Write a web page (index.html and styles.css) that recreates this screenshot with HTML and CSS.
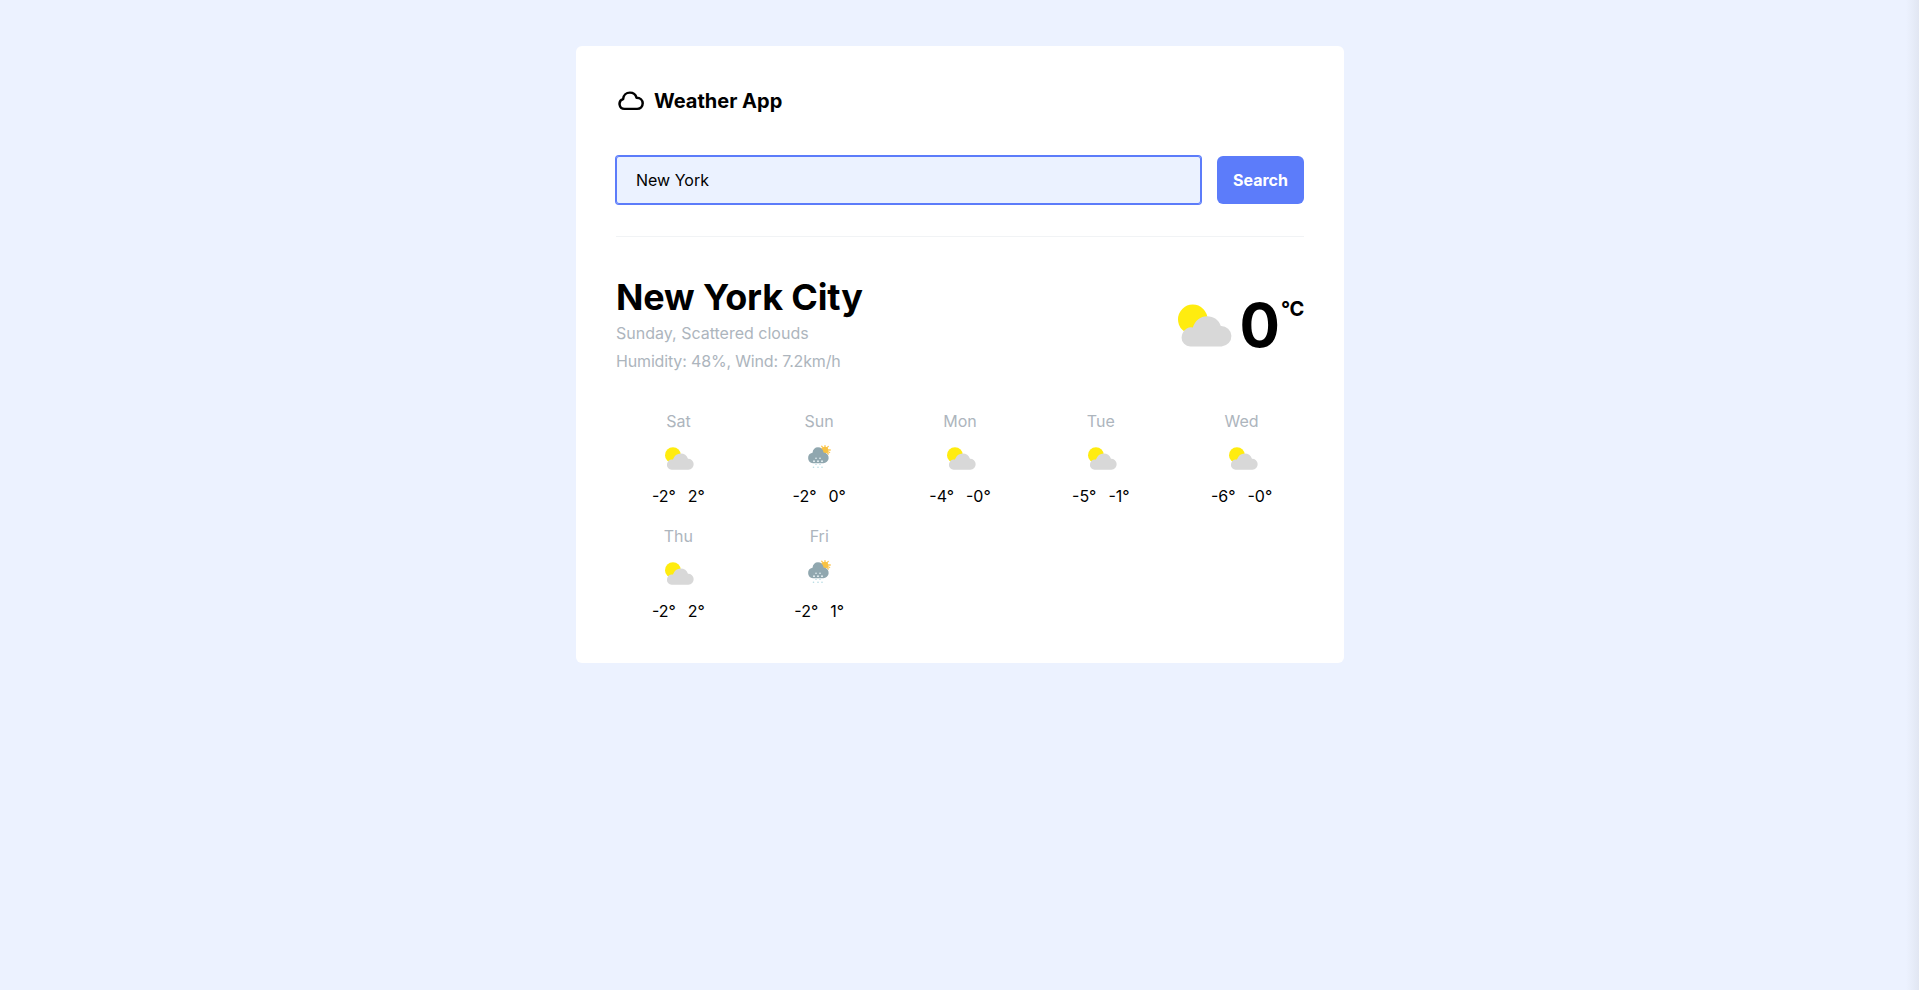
FILE: index.html
```html
<!DOCTYPE html>
<html lang="en">
<head>
<meta charset="utf-8">
<title>Weather App</title>
<link rel="stylesheet" href="styles.css">
</head>
<body>
<svg class="defs" width="0" height="0" aria-hidden="true">
  <symbol id="partly" viewBox="0 0 53 42">
    <circle cx="14.500" cy="15" r="14.500" fill="#ffec0f"/>
    <path d="M12 41.500a8.500 8.500 0 0 1-8.500-8.500q0-2.500 1-4.500a9 9 0 0 1 10-5.500C17 16 22 12 28.500 12c6.500 0 11.500 3.500 13.500 9.500A10 10 0 0 1 42.800 41.500Z" fill="#d8d8d8"/>
  </symbol>
  <symbol id="rain" viewBox="0 0 24 24">
    <g stroke="#fbc95c" stroke-width="1.300" stroke-linecap="round"><path d="M18 5V.6M18 5l3.300-3.600M18 5h5.300M18 5l4.600 2.500M18 5l3.300 4M18 5l-3.300-3.700M18 5l-4.300-1.300"/></g>
    <circle cx="18" cy="5" r="3.200" fill="#f8c242"/>
    <path d="M6 18.200A5.300 5.300 0 0 1 5.500 7.700C6 4.300 8 2.300 11 2.300c3.200 0 5 2 5.600 5.200a5.300 5.300 0 0 1-.6 10.700Z" fill="#90a7af"/>
    <g fill="#f2fbfd"><circle cx="9" cy="13.300" r=".75"/><circle cx="13" cy="13.300" r=".75"/><circle cx="7" cy="16.200" r=".85"/><circle cx="11" cy="16.200" r=".85"/><circle cx="15" cy="16.200" r=".85"/></g>
    <g fill="#b5dbe3"><circle cx="9" cy="19.400" r=".7"/><circle cx="13" cy="19.400" r=".7"/><circle cx="6.500" cy="22.300" r=".8"/><circle cx="11" cy="22.300" r=".8"/><circle cx="15" cy="22.300" r=".8"/></g>
  </symbol>
</svg>
<main class="card">
  <header class="brand">
    <svg class="brand-icon" viewBox="0 0 24 18" fill="none" stroke="#000" stroke-width="2.300" stroke-linejoin="round"><path d="M6 16.500a4.600 4.600 0 0 1-1.300-9C5 4 7.700 1.500 11 1.500c3 0 5.300 1.900 6.100 4.700 3.400 0 5.700 2.300 5.700 5.200 0 2.900-2.200 5.100-5.100 5.100Z"/></svg>
    <h1 class="brand-name">Weather App</h1>
  </header>
  <form class="search">
    <input class="search-input" type="text" value="New York" aria-label="City">
    <button class="search-button" type="button">Search</button>
  </form>
  <section class="current">
    <div>
      <h2 class="city">New York City</h2>
      <p class="detail">Sunday, Scattered clouds</p>
      <p class="detail measures">Humidity: 48%, Wind: 7.2km/h</p>
    </div>
    <div class="now">
      <svg class="now-icon"><use href="#partly"/></svg>
      <span class="temp">0</span>
      <span class="unit">°C</span>
    </div>
  </section>
  <section class="forecast">
    <div class="day"><span class="name">Sat</span><svg class="sky"><use href="#partly"/></svg><div class="range"><span>-2°</span><span>2°</span></div></div>
    <div class="day"><span class="name">Sun</span><svg class="sky wet"><use href="#rain"/></svg><div class="range"><span>-2°</span><span>0°</span></div></div>
    <div class="day"><span class="name">Mon</span><svg class="sky"><use href="#partly"/></svg><div class="range"><span>-4°</span><span>-0°</span></div></div>
    <div class="day"><span class="name">Tue</span><svg class="sky"><use href="#partly"/></svg><div class="range"><span>-5°</span><span>-1°</span></div></div>
    <div class="day"><span class="name">Wed</span><svg class="sky"><use href="#partly"/></svg><div class="range"><span>-6°</span><span>-0°</span></div></div>
    <div class="day"><span class="name">Thu</span><svg class="sky"><use href="#partly"/></svg><div class="range"><span>-2°</span><span>2°</span></div></div>
    <div class="day"><span class="name">Fri</span><svg class="sky wet"><use href="#rain"/></svg><div class="range"><span>-2°</span><span>1°</span></div></div>
  </section>
</main>
</body>
</html>
```
FILE: styles.css
```css
* { box-sizing: border-box; margin: 0; }
body {
  min-height: 100vh;
  padding: 46px 0 0 1px;
  background: linear-gradient(to left, #e1e6f2, #ecf2ff00 13px) #ecf2ff;
  font: 16px/24px Inter, sans-serif;
  color: #000;
}
.defs { position: absolute; }
.card {
  width: 768px;
  height: 617px;
  margin: 0 auto;
  padding: 40px;
  background: #fff;
  border-radius: 6px;
}
.brand { display: flex; align-items: center; height: 30px; padding-left: 2px; }
.brand-icon { width: 26px; height: 19.5px; margin-right: 10px; }
.brand-name { font-size: 20px; line-height: 30px; font-weight: 700; }
.search {
  display: flex;
  gap: 16px;
  margin-top: 40px;
  padding-bottom: 32px;
  border-bottom: 1px solid #f1f3f5;
}
.search-input {
  flex: 1;
  min-width: 0;
  height: 48px;
  padding: 0 20px;
  border: 0;
  border-radius: 3px;
  outline: 0;
  box-shadow: 0 0 0 1px #5c7cfa, inset 0 0 0 1px #5c7cfa;
  background: #ebf2ff;
  font: inherit;
  color: #000;
}
.search-button {
  width: 87px;
  height: 48px;
  padding: 0;
  border: 0;
  border-radius: 6px;
  background: #5c7cfa;
  color: #fff;
  font: inherit;
  font-weight: 700;
}
.current { display: flex; justify-content: space-between; align-items: center; margin-top: 38px; }
.city { font-size: 36px; line-height: 44px; font-weight: 700; letter-spacing: -0.15px; }
.detail { line-height: 28px; color: #adb5bd; }
.measures { letter-spacing: -0.16px; }
.now { display: flex; align-items: flex-start; }
.now-icon { width: 54px; height: 43px; margin: 9px 7px 0 0; }
.temp { font-size: 60px; line-height: 60px; font-weight: 700; }
.unit { margin-left: 1px; font-size: 20px; line-height: 28px; font-weight: 700; letter-spacing: -0.3px; }
.forecast {
  display: grid;
  grid-template-columns: repeat(5, 1fr);
  gap: 16px;
  margin-top: 34px;
}
.day { display: flex; flex-direction: column; align-items: center; height: 99px; }
.name { color: #adb5bd; }
.sky { width: 29px; height: 23px; margin: 14px 0 14px 3px; }
.wet { width: 24px; height: 24px; margin: 12px 0 15px; }
.range { display: flex; gap: 12px; }
```
